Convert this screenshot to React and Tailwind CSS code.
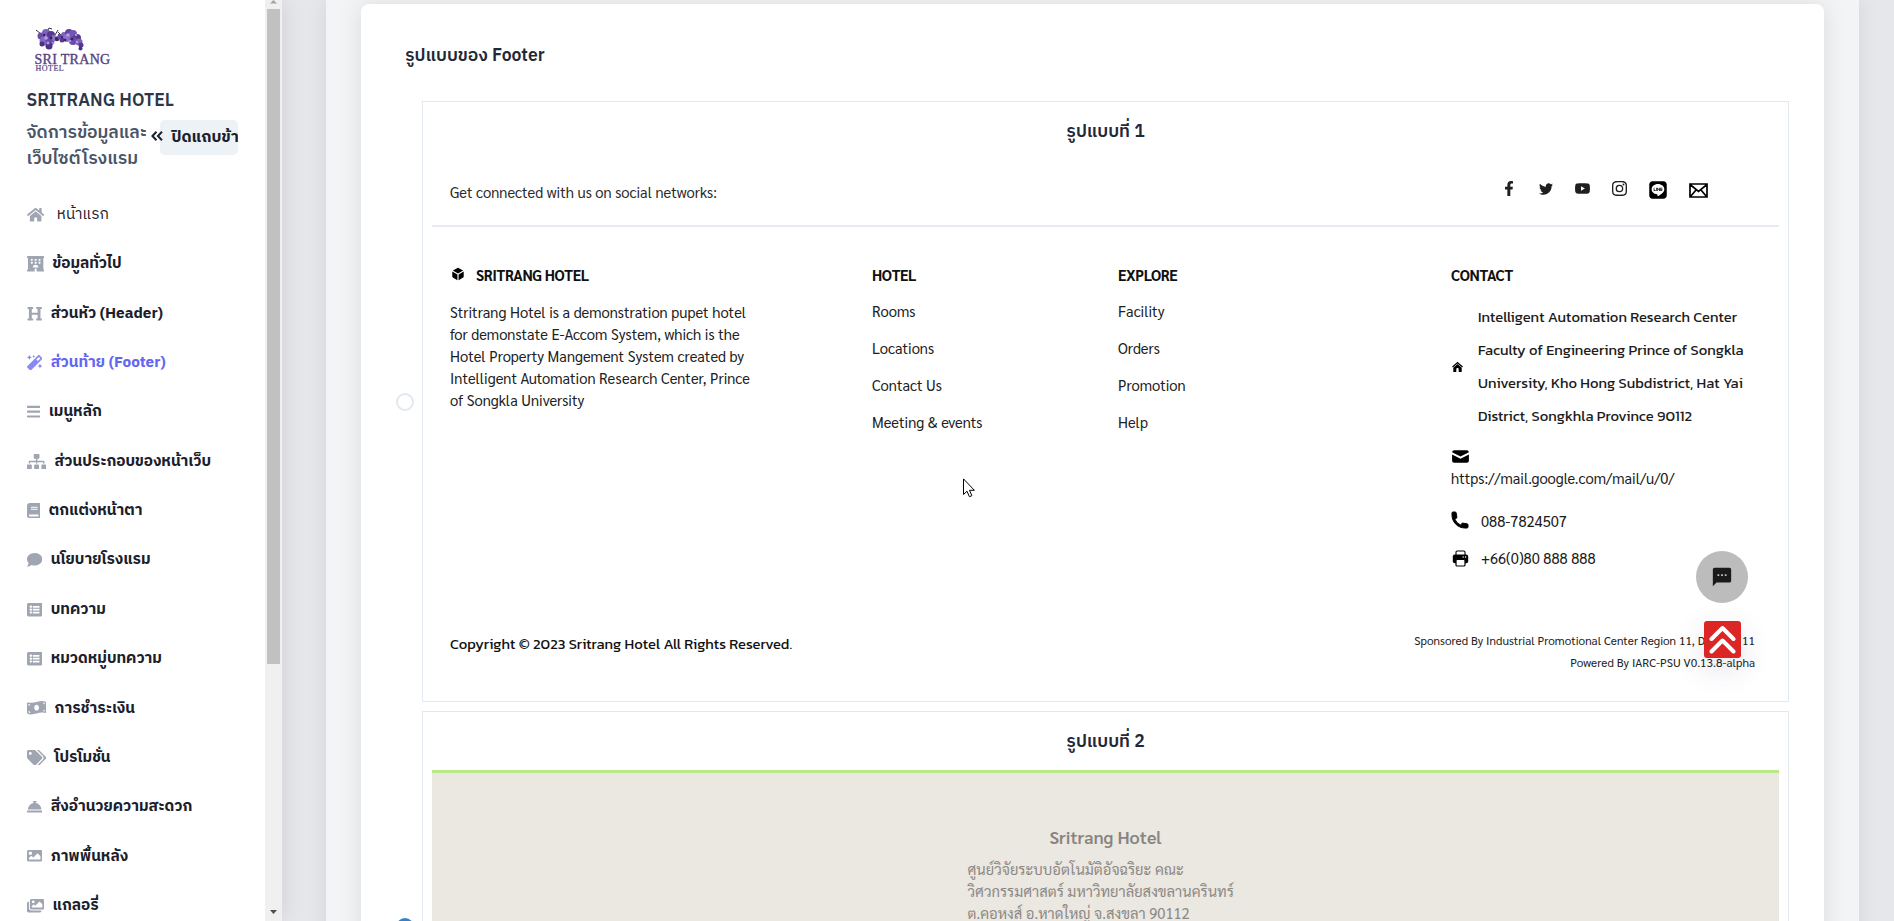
import React from "react";
import {
  FaHome, FaHotel, FaHeading, FaMagic, FaBars, FaSitemap, FaBook, FaComment, FaListAlt,
  FaMoneyBillWave, FaTags, FaConciergeBell, FaImage, FaImages, FaFacebookF, FaTwitter, FaLine,
} from "react-icons/fa";
import { BsInstagram } from "react-icons/bs";
import { HiMail, HiPhone } from "react-icons/hi";
import { MdSms } from "react-icons/md";
import { AiFillYoutube } from "react-icons/ai";

const thai = "font-['IBM_Plex_Sans_Thai','Noto_Sans_Thai','Noto_Sans',sans-serif]";
const sarabun = "font-['Sarabun','Noto_Sans_Thai','Noto_Sans',sans-serif]";
const kanit = "font-['Kanit','Noto_Sans',sans-serif]";

const MENU = [
  { icon: FaHome, label: "หน้าแรก", w: "w-[17.3px]", style: "ml-[13px] font-normal" },
  { icon: FaHotel, label: "ข้อมูลทั่วไป", w: "w-[17.3px]" },
  { icon: FaHeading, label: "ส่วนหัว (Header)", w: "w-[15.4px]" },
  { icon: FaMagic, label: "ส่วนท้าย (Footer)", w: "w-[15.4px]", active: true },
  { icon: FaBars, label: "เมนูหลัก", w: "w-[13.5px]" },
  { icon: FaSitemap, label: "ส่วนประกอบของหน้าเว็บ", w: "w-[19.2px]" },
  { icon: FaBook, label: "ตกแต่งหน้าตา", w: "w-[13.5px]" },
  { icon: FaComment, label: "นโยบายโรงแรม", w: "w-[15.4px]" },
  { icon: FaListAlt, label: "บทความ", w: "w-[15.4px]" },
  { icon: FaListAlt, label: "หมวดหมู่บทความ", w: "w-[15.4px]" },
  { icon: FaMoneyBillWave, label: "การชำระเงิน", w: "w-[19.2px]" },
  { icon: FaTags, label: "โปรโมชั่น", w: "w-[19.2px]" },
  { icon: FaConciergeBell, label: "สิ่งอำนวยความสะดวก", w: "w-[15.4px]" },
  { icon: FaImage, label: "ภาพพื้นหลัง", w: "w-[15.4px]" },
  { icon: FaImages, label: "แกลอรี่", w: "w-[17.3px]" },
];

// Flower cluster of the logo: x, y, radius, colour
const PETALS = [
  [6, 9, 3.5, "#6b4aa8"], [11, 6, 4, "#7d5fc0"], [16, 8, 4, "#56388f"], [9, 14, 4.5, "#8467c4"],
  [15, 14, 4.5, "#6a49ab"], [14, 19, 3.5, "#4b3085"], [19, 11, 3, "#8d72cc"], [7, 17, 2.5, "#4b3085"],
  [22, 12, 2.2, "#3a2a55"], [25, 10, 2.5, "#6b4aa8"], [29, 8, 3, "#7d5fc0"], [34, 6, 4, "#6340a3"],
  [32, 11, 4, "#8a70ca"], [38, 7, 4, "#7455b6"], [42, 11, 4, "#54368e"], [38, 14, 4, "#6b4aa8"],
  [44, 15, 3.5, "#7d5fc0"], [46, 18, 2.5, "#56388f"], [45.5, 21.5, 2, "#47308a"], [27, 13, 2.5, "#56388f"],
  [11, 11, 1.8, "#b3a0e2"], [16, 11, 1.4, "#2f2050"], [13, 16, 1.5, "#b09ce0"], [33, 8, 1.8, "#b3a0e2"],
  [37, 12, 1.4, "#35255c"], [41, 8, 1.3, "#a892dd"], [9, 8, 1.2, "#35255c"], [30, 13, 1.3, "#35255c"],
  [18, 16, 1.3, "#9e86d8"], [42, 15, 1.2, "#b3a0e2"], [27, 10, 1.1, "#2f2050"], [35, 14, 1.3, "#a892dd"],
];

function Logo() {
  return (
    <div className="ml-[8px] flex h-[47px] w-[90px] flex-col text-[#55427f]">
      <svg viewBox="0 0 50 25" className="h-[25px] w-[50px] shrink-0">
        <path d="M1 3l5 4M12 5l2-4 3 1M20 8l3-5M21 14l3-7 2 6M23 5l3 3" stroke="#3a3347" strokeWidth="1" fill="none" />
        {PETALS.map(([x, y, r, c], i) => <circle key={i} cx={x} cy={y} r={r} fill={c} />)}
      </svg>
      <span className="-mt-[0.5px] whitespace-nowrap font-['Liberation_Serif',serif] text-[14px] leading-[15px] tracking-[0.3px] [-webkit-text-stroke:0.35px_#55427f]">SRI TRANG</span>
      <span className="-mt-[2px] ml-px font-['Liberation_Serif',serif] text-[8px] leading-[8px] tracking-[0.5px] [-webkit-text-stroke:0.2px_#55427f]">HOTEL</span>
    </div>
  );
}

function Sidebar() {
  return (
    <aside className="relative z-10 flex w-[282px] shrink-0 bg-white shadow-[0_0_24px_rgba(0,0,0,0.10)]">
      <div className="w-[265px] overflow-hidden pl-[26.5px] pt-[27px]">
        <Logo />
        <div className="mt-[14px] text-[17.6px] font-semibold leading-[26px] text-[#2d3748]">SRITRANG HOTEL</div>
        <div className="mt-[5.5px] flex">
          <div className="w-[124px] shrink-0 whitespace-nowrap pt-[0.5px] text-[17.6px] font-semibold leading-[26.4px] text-[#4a5568]">
            <div>จัดการข้อมูลและ</div>
            <div>เว็บไซต์โรงแรม</div>
          </div>
          <svg viewBox="0 0 12 10" className="z-10 mt-[11px] h-[10px] w-[12px] shrink-0 fill-none stroke-[#1a202c] stroke-[2]">
            <path d="M5.5.7 1.4 5l4.1 4.3M11 .7 6.9 5 11 9.3" />
          </svg>
          <div className="-ml-[3px] h-[35px] w-[78px] shrink-0 overflow-hidden whitespace-nowrap rounded-[5px] bg-[#edf2f7] pl-[12px] pt-[4px] text-[16px] font-bold leading-[27px] text-[#1a202c]">
            ปิดแถบข้าง
          </div>
        </div>
        <nav className="mt-[17px] flex flex-col">
          {MENU.map(({ icon: Icon, label, w, style, active }) => (
            <a key={label} className={`flex h-[49.37px] items-center whitespace-nowrap text-[15.4px] ${active ? "text-[#6366f1]" : "text-[#1a202c]"}`}>
              <Icon className={`h-[15.4px] shrink-0 ${w} ${active ? "text-[#8688f6]" : "text-[#a0a5b2]"}`} />
              <span className={style || "ml-[8.8px] font-bold"}>{label}</span>
            </a>
          ))}
        </nav>
      </div>
      <div className="flex w-[17px] flex-col items-center bg-[#f0f0f0]">
        <div className="flex h-[9px] items-start"><svg viewBox="0 0 7 4" className="h-[4px] w-[7px] fill-[#a3a3a3]"><path d="M0 3.5 3.5 0 7 3.5z" /></svg></div>
        <div className="h-[655px] w-[13px] bg-[#c1c1c1]" />
        <svg viewBox="0 0 7 4" className="mb-[7px] mt-auto h-[4px] w-[7px] fill-[#505050]"><path d="M0 0h7L3.5 4z" /></svg>
      </div>
    </aside>
  );
}

function CubeIcon() {
  return (
    <svg viewBox="0 0 24 24" className="-mt-[2px] ml-px h-[14px] w-[14px] fill-black">
      <path d="M11.1 1.6 3.2 6.1 12 11.1l8.800-5-7.900-4.500a1.900 1.900 0 0 0-1.800 0zM2.200 7.800v8.600c0 .7.4 1.300.9 1.600l7.900 4.500V12.800zM21.800 7.800 13 12.800v9.700l7.900-4.500c.5-.3.9-.9.9-1.600z" />
    </svg>
  );
}

function PrinterIcon() {
  return (
    <svg viewBox="0 0 17 17" className="ml-px h-[17px] w-[17px]">
      <rect x="4" y="1" width="9" height="6" rx="1.2" fill="#fff" stroke="#000" strokeWidth="1.1" />
      <rect x="0.8" y="4.5" width="15.4" height="8.8" rx="2" />
      <rect x="4" y="9.5" width="9" height="6.5" rx="1" fill="#fff" stroke="#000" strokeWidth="1.2" />
      <circle cx="11.2" cy="7" r="0.7" fill="#fff" />
      <circle cx="13.6" cy="7" r="0.7" fill="#fff" />
    </svg>
  );
}

function Column({ title, links, className }) {
  return (
    <div className={className}>
      <div className="text-[14.72px] font-bold leading-[22px] tracking-[-0.35px] text-[#111]">{title}</div>
      <ul className="mt-[7.4px] text-[14.72px] leading-[36.8px] text-[#212121]">
        {links.map((l) => <li key={l}>{l}</li>)}
      </ul>
    </div>
  );
}

function Contact() {
  return (
    <div className="w-[300px] text-[14.72px] text-[#1c1c1c]">
      <div className="font-bold leading-[22px] tracking-[-0.35px] text-[#111]">CONTACT</div>
      <div className="mt-[15px] flex items-center">
        <svg viewBox="0 0 12 12" className="mr-[14px] h-[12px] w-[13px] fill-black">
          <path d="M6 .8.6 5.6l.8.8L6 2.4l4.6 4 .8-.8z" />
          <path d="M6 3.1 1.8 6.8V11h3V8.2c0-1.5 2.4-1.5 2.4 0V11h3V6.8z" />
        </svg>
        <div className={`${kanit} leading-[33.12px]`}>
          <div>Intelligent Automation Research Center</div>
          <div>Faculty of Engineering Prince of Songkla</div>
          <div>University, Kho Hong Subdistrict, Hat Yai</div>
          <div>District, Songkhla Province 90112</div>
        </div>
      </div>
      <HiMail className="-ml-px mt-[12px] h-[21px] w-[21px] text-black" />
      <div className="leading-[22px]">https://mail.google.com/mail/u/0/</div>
      <div className="mt-[20px] flex h-[26px] items-center gap-[11px]">
        <HiPhone className="-ml-px -mt-[4px] h-[20px] w-[20px] stroke-black stroke-[1] text-black [stroke-linejoin:round]" />
        <span>088-7824507</span>
      </div>
      <div className="mt-[11px] flex h-[26px] items-center gap-[12px]">
        <PrinterIcon />
        <span>+66(0)80 888 888</span>
      </div>
    </div>
  );
}

function FooterOne() {
  return (
    <div className={`${sarabun} relative mx-[9px] text-[14.72px]`}>
      <div className="flex h-[78px] items-center border-b-2 border-[#e6ebf1] pl-[18px] pt-[10px]">
        <span className="text-[#2b2b2b]">Get connected with us on social networks:</span>
        <div className="mb-[7px] ml-auto mr-[71px] flex items-center text-[#1f1f1f]">
          <FaFacebookF className="h-[15px] w-[10px]" />
          <FaTwitter className="ml-[25px] h-[14px] w-[14px]" />
          <AiFillYoutube className="ml-[21px] h-[17px] w-[17px]" />
          <BsInstagram className="ml-[21px] h-[15px] w-[15px]" />
          <FaLine className="ml-[21px] mt-[2px] h-[20px] w-[20px] text-black" />
          <svg viewBox="0 0 19 15" className="ml-[21px] mt-[3px] h-[15px] w-[19px] fill-none stroke-black stroke-[1.7]">
            <path d="M1 1h17v13H1zM1 1.5l8.5 7 8.5-7M1.5 13.5l5.5-6.5M17.5 13.5 12 7" />
          </svg>
        </div>
      </div>
      <div className="mt-[37px] flex pl-[18px]">
        <div className="w-[422px]">
          <div className="flex items-center gap-[11px]">
            <CubeIcon />
            <span className="font-bold leading-[22px] tracking-[-0.35px] text-[#111]">SRITRANG HOTEL</span>
          </div>
          <p className="mt-[15px] w-[310px] leading-[22.08px] text-[#212121]">
            Stritrang Hotel is a demonstration pupet hotel for demonstate E-Accom System, which is the Hotel Property Mangement System created by Intelligent Automation Research Center, Prince of Songkla University
          </p>
        </div>
        <Column className="w-[246px]" title="HOTEL" links={["Rooms", "Locations", "Contact Us", "Meeting & events"]} />
        <Column className="w-[333px]" title="EXPLORE" links={["Facility", "Orders", "Promotion", "Help"]} />
        <Contact />
      </div>
      <div className="mt-[57px] flex items-center justify-between pl-[18px] pr-[24px]">
        <span className={`${kanit} mb-[13px] text-[#111]`}>Copyright © 2023 Sritrang Hotel All Rights Reserved.</span>
        <div className="text-right text-[11.78px] leading-[22.08px] text-[#222]">
          <div>Sponsored By Industrial Promotional Center Region 11, DIPROM 11</div>
          <div>Powered By IARC-PSU V0.13.8-alpha</div>
        </div>
      </div>
      <div className="absolute right-[31px] top-[402px] flex h-[52px] w-[52px] items-center justify-center rounded-full bg-[#bcbcbc]">
        <MdSms className="h-[22px] w-[22px] text-[#1a1a1a]" />
      </div>
      <div className="absolute right-[38px] top-[472px] flex h-[37px] w-[37px] items-center justify-center rounded-[3px] bg-[#dc2626] shadow-[0_10px_30px_rgba(60,60,120,0.15)]">
        <svg viewBox="0 0 27 29" className="h-[29px] w-[27px] fill-none stroke-white stroke-[4]" strokeLinecap="round" strokeLinejoin="round">
          <path d="M2.5 14 13.5 3l11 11M2.5 26.5l11-11 11 11" />
        </svg>
      </div>
    </div>
  );
}

function FooterTwo() {
  return (
    <div className={`${sarabun} mx-[9px] mt-[11px] h-[370px] border-t-[3px] border-[#b7e986] bg-[#ebe7e1]`}>
      <div className="pt-[50px] text-center text-[17.7px] font-semibold leading-[28px] text-[#87847f]">Sritrang Hotel</div>
      <div className="ml-[535.5px] mt-[7px] whitespace-nowrap text-[14.72px] leading-[22.08px] text-[#8c8984]">
        <div>ศูนย์วิจัยระบบอัตโนมัติอัจฉริยะ คณะ</div>
        <div>วิศวกรรมศาสตร์ มหาวิทยาลัยสงขลานครินทร์</div>
        <div>ต.คอหงส์ อ.หาดใหญ่ จ.สงขลา 90112</div>
      </div>
    </div>
  );
}

function Option({ title, selected, className, children }) {
  return (
    <label className="flex items-center">
      <span className={`h-[18px] w-[18px] shrink-0 rounded-full ${selected ? "bg-[#3182ce]" : "border-2 border-[#e2e8f0] bg-white"}`} />
      <div className={`ml-[8px] w-[1367px] border border-[#e2e8f0] ${className}`}>
        <div className="h-[47px] pt-[16px] text-center text-[17.6px] font-semibold leading-[28px] text-[#1f2937]">{title}</div>
        {children}
      </div>
    </label>
  );
}

export default function App() {
  return (
    <div className={`${thai} relative flex h-[921px] w-[1894px] overflow-hidden bg-[#e5e7eb]`}>
      <Sidebar />
      <main className="ml-[44px] h-[1000px] w-[1533px] bg-[#f3f4f6] px-[35px] pt-[4px] shadow-[0_0_20px_rgba(0,0,0,0.08)]">
        <section className="h-[1000px] rounded-[8px] bg-white pl-[35px] pt-[38px] shadow-[0_0_24px_rgba(0,0,0,0.10)]">
          <h2 className="ml-[9px] text-[17.6px] font-semibold leading-[28px] text-[#1f2937]">รูปแบบของ Footer</h2>
          <div className="mt-[31px] flex flex-col gap-[9px]">
            <Option title="รูปแบบที่ 1" className="h-[601px]"><FooterOne /></Option>
            <Option title="รูปแบบที่ 2" selected className="h-[431px]"><FooterTwo /></Option>
          </div>
        </section>
      </main>
      <svg viewBox="0 0 12 20" className="absolute left-[963px] top-[478px] h-[20px] w-[12px] fill-white stroke-black">
        <path d="M.5.9v15.6l3.5-3.3 2.4 5.5 2.5-1-2.4-5.4h4.9z" />
      </svg>
    </div>
  );
}
